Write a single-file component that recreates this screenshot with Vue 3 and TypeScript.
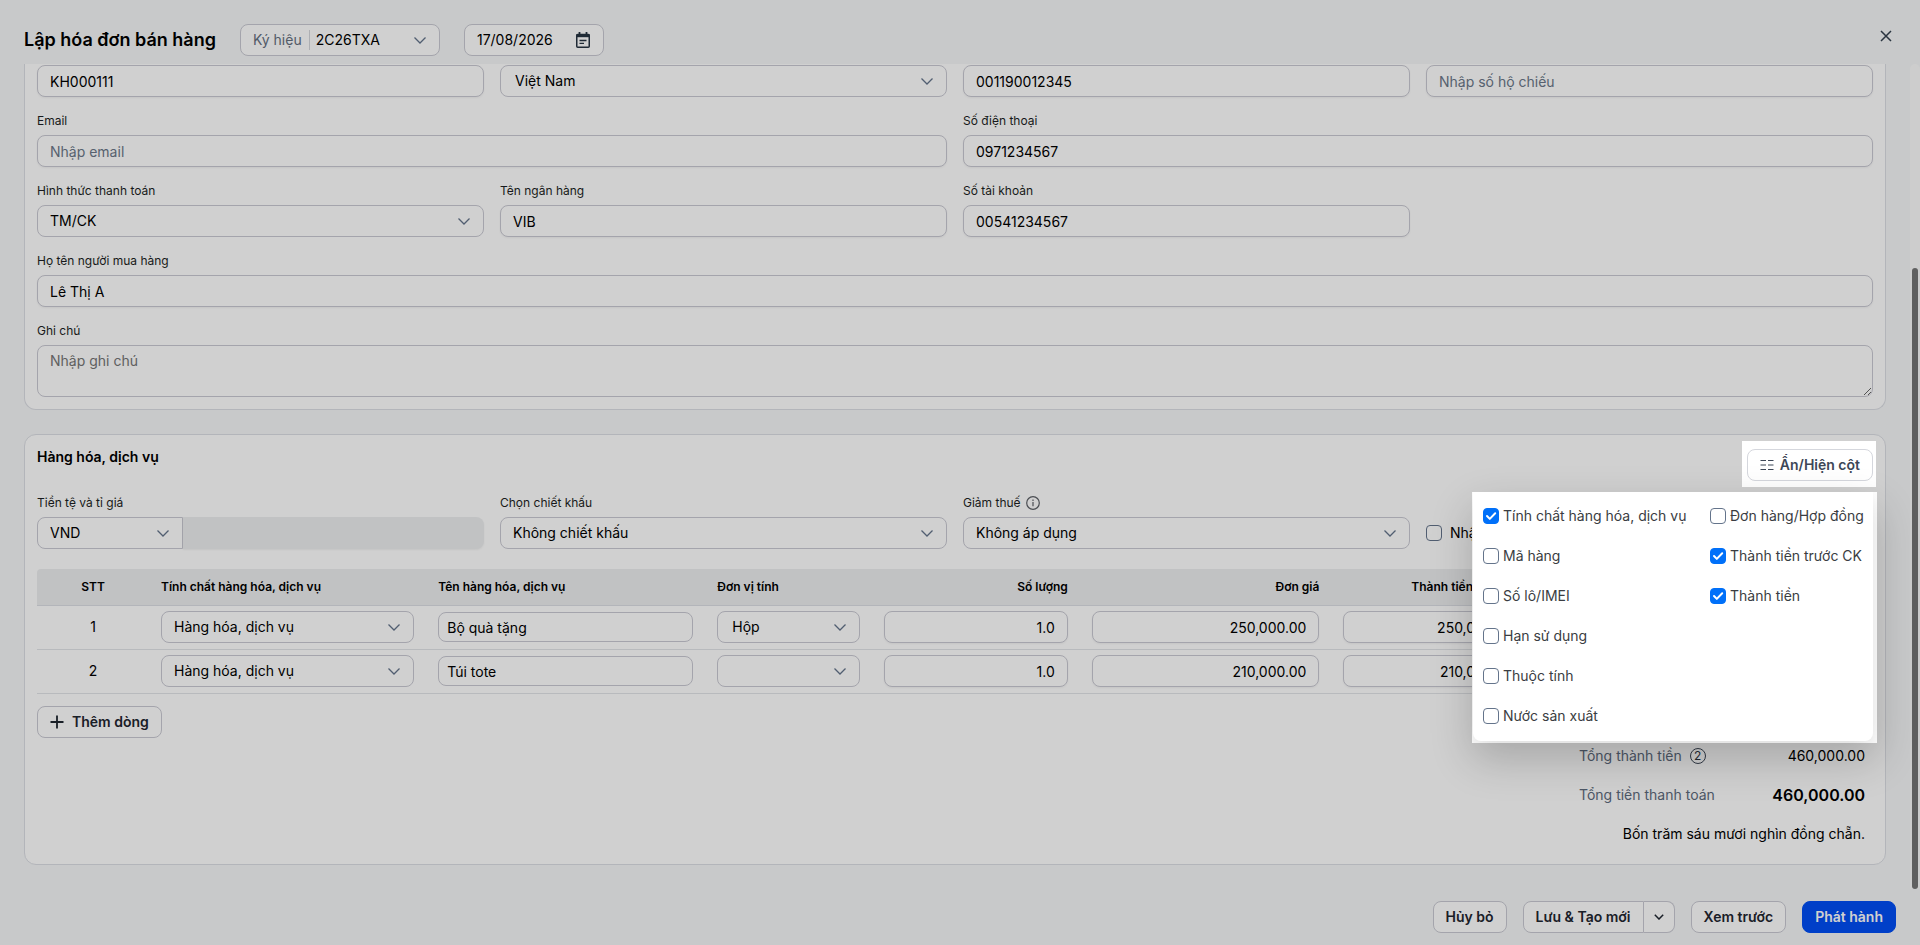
<script setup lang="ts">
import { ref } from 'vue'

interface ColumnOption {
  label: string
  shown: boolean
}

interface InvoiceLine {
  name: string
  unit: string
  quantity: string
  price: string
  amount: string
}

const series = ref('2C26TXA')
const issueDate = ref('17/08/2026')
const customerCode = ref('KH000111')
const country = ref('Việt Nam')
const citizenId = ref('001190012345')
const passport = ref('')
const email = ref('')
const phone = ref('0971234567')
const paymentMethod = ref('TM/CK')
const bankName = ref('VIB')
const bankAccount = ref('00541234567')
const buyerName = ref('Lê Thị A')
const note = ref('')
const currency = ref('VND')
const discount = ref('Không chiết khấu')
const taxReduction = ref('Không áp dụng')
const manualEntry = ref(false)
const pickerOpen = ref(true)

const columnOptions = ref<ColumnOption[]>([
  { label: 'Tính chất hàng hóa, dịch vụ', shown: true },
  { label: 'Mã hàng', shown: false },
  { label: 'Số lô/IMEI', shown: false },
  { label: 'Hạn sử dụng', shown: false },
  { label: 'Thuộc tính', shown: false },
  { label: 'Nước sản xuất', shown: false },
  { label: 'Đơn hàng/Hợp đồng', shown: false },
  { label: 'Thành tiền trước CK', shown: true },
  { label: 'Thành tiền', shown: true },
])

const lines = ref<InvoiceLine[]>([
  { name: 'Bộ quà tặng', unit: 'Hộp', quantity: '1.0', price: '250,000.00', amount: '250,000.00' },
  { name: 'Túi tote', unit: '', quantity: '1.0', price: '210,000.00', amount: '210,000.00' },
])
</script>

<template>
  <div class="page">
    <header class="topbar">
      <h1>Lập hóa đơn bán hàng</h1>
      <div class="series control">
        <label for="series">Ký hiệu</label>
        <span class="select">
          <select id="series" v-model="series"><option>2C26TXA</option></select>
          <svg class="chevron" viewBox="0 0 12 7"><path d="M.5.5 6 6 11.5.5" /></svg>
        </span>
      </div>
      <div class="date control">
        <input v-model="issueDate" type="text" aria-label="Ngày hóa đơn" />
        <svg viewBox="0 0 16 16" width="16" height="16">
          <path d="M1.500 2h13v3.200h-13z" fill="#273442" />
          <path d="M4.500 0v3M11.500 0v3" stroke="#273442" stroke-width="1.800" />
          <rect x="1.750" y="2.500" width="12.500" height="12.700" rx="1" fill="none" stroke="#273442" stroke-width="1.500" />
          <path d="M4.500 8.500h7M4.500 11.300h4.500" stroke="#273442" stroke-width="1.300" />
        </svg>
      </div>
      <button class="close" type="button" aria-label="Đóng">
        <svg viewBox="0 0 12 12" width="12" height="12"><path d="m1 1 10 10M11 1 1 11" stroke="#34404f" stroke-width="1.500" fill="none" /></svg>
      </button>
    </header>

    <div class="body">
      <main>
        <section class="card customer">
          <div class="fields">
            <input v-model="customerCode" class="control" type="text" aria-label="Mã khách hàng" />
            <span class="select roomy">
              <select v-model="country" class="control" aria-label="Quốc gia"><option>Việt Nam</option></select>
              <svg class="chevron" viewBox="0 0 12 7"><path d="M.5.5 6 6 11.5.5" /></svg>
            </span>
            <input v-model="citizenId" class="control" type="text" aria-label="Số căn cước" />
            <input v-model="passport" class="control" type="text" placeholder="Nhập số hộ chiếu" aria-label="Số hộ chiếu" />

            <div class="field half">
              <label for="email">Email</label>
              <input id="email" v-model="email" class="control" type="text" placeholder="Nhập email" />
            </div>
            <div class="field half">
              <label for="phone">Số điện thoại</label>
              <input id="phone" v-model="phone" class="control" type="text" />
            </div>

            <div class="field">
              <label for="payment">Hình thức thanh toán</label>
              <span class="select">
                <select id="payment" v-model="paymentMethod" class="control"><option>TM/CK</option></select>
                <svg class="chevron" viewBox="0 0 12 7"><path d="M.5.5 6 6 11.5.5" /></svg>
              </span>
            </div>
            <div class="field">
              <label for="bank">Tên ngân hàng</label>
              <input id="bank" v-model="bankName" class="control" type="text" />
            </div>
            <div class="field">
              <label for="account">Số tài khoản</label>
              <input id="account" v-model="bankAccount" class="control" type="text" />
            </div>

            <div class="field full">
              <label for="buyer">Họ tên người mua hàng</label>
              <input id="buyer" v-model="buyerName" class="control" type="text" />
            </div>
            <div class="field full">
              <label for="note">Ghi chú</label>
              <textarea id="note" v-model="note" class="control" placeholder="Nhập ghi chú"></textarea>
            </div>
          </div>
        </section>

        <section class="card goods">
          <div class="goods-head">
            <h2>Hàng hóa, dịch vụ</h2>
            <div class="picker">
              <button class="btn toggle" type="button" :aria-expanded="pickerOpen" @click="pickerOpen = !pickerOpen">
                <svg viewBox="0 0 14 12" width="14" height="12">
                  <path d="M.5 1.500h5.500M8 1.500h5.500M.5 6h5.500M8 6h5.500M.5 10.500h5.500M8 10.500h5.500" stroke="#3d4757" stroke-width="1.200" />
                </svg>
                Ẩn/Hiện cột
              </button>
              <div v-if="pickerOpen" class="menu-frame">
                <div class="menu-clip">
                  <div class="menu">
                    <label v-for="option in columnOptions" :key="option.label">
                      <span class="check">
                        <input v-model="option.shown" type="checkbox" />
                        <svg viewBox="0 0 16 16"><path d="m4 8 2.800 2.900L12.200 5.300" /></svg>
                      </span>
                      {{ option.label }}
                    </label>
                  </div>
                </div>
              </div>
            </div>
          </div>

          <div class="fields">
            <div class="field">
              <label for="currency">Tiền tệ và tỉ giá</label>
              <div class="currency">
                <span class="select">
                  <select id="currency" v-model="currency" class="control"><option>VND</option></select>
                  <svg class="chevron" viewBox="0 0 12 7"><path d="M.5.5 6 6 11.5.5" /></svg>
                </span>
                <input type="text" disabled aria-label="Tỉ giá" />
              </div>
            </div>
            <div class="field">
              <label for="discount">Chọn chiết khấu</label>
              <span class="select">
                <select id="discount" v-model="discount" class="control"><option>Không chiết khấu</option></select>
                <svg class="chevron" viewBox="0 0 12 7"><path d="M.5.5 6 6 11.5.5" /></svg>
              </span>
            </div>
            <div class="field">
              <label for="tax">Giảm thuế
                <svg viewBox="0 0 14 14" width="14" height="14">
                  <circle cx="7" cy="7" r="6.300" fill="none" stroke="#5c6066" stroke-width="1.200" />
                  <path d="M7 6v4.200M7 3.600v1.300" stroke="#5c6066" stroke-width="1.200" />
                </svg>
              </label>
              <span class="select">
                <select id="tax" v-model="taxReduction" class="control"><option>Không áp dụng</option></select>
                <svg class="chevron" viewBox="0 0 12 7"><path d="M.5.5 6 6 11.5.5" /></svg>
              </span>
            </div>
            <label class="manual">
              <span class="check">
                <input v-model="manualEntry" type="checkbox" />
                <svg viewBox="0 0 16 16"><path d="m4 8 2.800 2.900L12.200 5.300" /></svg>
              </span>
              Nhập
            </label>
          </div>

          <table>
            <colgroup>
              <col class="c-index" />
              <col class="c-kind" />
              <col class="c-name" />
              <col class="c-unit" />
              <col class="c-money" />
              <col class="c-price" />
              <col class="c-money" />
              <col />
            </colgroup>
            <thead>
              <tr>
                <th class="center">STT</th>
                <th>Tính chất hàng hóa, dịch vụ</th>
                <th>Tên hàng hóa, dịch vụ</th>
                <th>Đơn vị tính</th>
                <th class="right">Số lượng</th>
                <th class="right">Đơn giá</th>
                <th class="right">Thành tiền trước CK</th>
                <th></th>
              </tr>
            </thead>
            <tbody>
              <tr v-for="(line, index) in lines" :key="line.name">
                <td class="center">{{ index + 1 }}</td>
                <td>
                  <span class="select">
                    <select class="control" aria-label="Tính chất"><option>Hàng hóa, dịch vụ</option></select>
                    <svg class="chevron" viewBox="0 0 12 7"><path d="M.5.5 6 6 11.5.5" /></svg>
                  </span>
                </td>
                <td><input v-model="line.name" class="control compact" type="text" aria-label="Tên hàng" /></td>
                <td>
                  <span class="select roomy">
                    <select v-model="line.unit" class="control" aria-label="Đơn vị tính"><option>{{ line.unit }}</option></select>
                    <svg class="chevron" viewBox="0 0 12 7"><path d="M.5.5 6 6 11.5.5" /></svg>
                  </span>
                </td>
                <td><input v-model="line.quantity" class="control right" type="text" aria-label="Số lượng" /></td>
                <td><input v-model="line.price" class="control right" type="text" aria-label="Đơn giá" /></td>
                <td><input v-model="line.amount" class="control right" type="text" aria-label="Thành tiền" /></td>
                <td></td>
              </tr>
            </tbody>
          </table>

          <button class="btn add" type="button">
            <svg viewBox="0 0 14 14" width="14" height="14"><path d="M7 .5v13M.5 7h13" stroke="#1f2630" stroke-width="1.800" /></svg>
            Thêm dòng
          </button>

          <div class="totals">
            <div class="total">
              <span>Tổng thành tiền <i>2</i></span>
              <b class="plain">460,000.00</b>
            </div>
            <div class="total">
              <span>Tổng tiền thanh toán</span>
              <b>460,000.00</b>
            </div>
            <p>Bốn trăm sáu mươi nghìn đồng chẵn.</p>
          </div>
        </section>
      </main>
      <div class="track"><div class="thumb"></div></div>
    </div>

    <footer>
      <button class="btn" type="button">Hủy bỏ</button>
      <div class="split">
        <button class="btn" type="button">Lưu &amp; Tạo mới</button>
        <button class="btn more" type="button" aria-label="Thêm lựa chọn">
          <svg viewBox="0 0 10 6" width="10" height="6"><path d="m.8.8 4.200 4.200L9.200.8" stroke="#1f2630" stroke-width="1.500" fill="none" /></svg>
        </button>
      </div>
      <button class="btn" type="button">Xem trước</button>
      <button class="btn primary" type="button">Phát hành</button>
    </footer>

    <div class="scrim"></div>
  </div>
</template>

<style>
body {
  margin: 0;
  background: #f5f7f8;
}
</style>

<style scoped>
* {
  box-sizing: border-box;
}

.page {
  display: flex;
  flex-direction: column;
  min-height: 100vh;
  background: #f5f7f8;
  color: #000;
  font: 14px/20px Inter, "Liberation Sans", sans-serif;
}

input,
select,
textarea,
button {
  margin: 0;
  color: inherit;
  font: inherit;
}

.topbar {
  display: flex;
  align-items: flex-start;
  gap: 24px;
  padding: 24px 22px 8px 24px;
}

h1 {
  margin: 0;
  font-size: 18px;
  line-height: 32px;
  font-weight: 600;
}

.control {
  width: 100%;
  height: 32px;
  padding: 0 12px;
  border: 1px solid #cacad3;
  border-radius: 8px;
  background: #fff;
  outline: none;
}

input.control {
  box-shadow: 0 1px 2px rgba(0, 0, 0, 0.05);
}

::placeholder {
  color: #6b7788;
  opacity: 1;
}

.series {
  display: flex;
  align-items: center;
  width: 200px;
}

.series label {
  padding-right: 7px;
  border-right: 1px solid #d5d7dc;
  color: #65707f;
}

.series .select {
  flex: 1;
}

.series select {
  padding: 0 6px;
  border: 0;
  background: none;
}

.series .chevron {
  margin-right: 1px;
}

.date {
  display: flex;
  align-items: center;
  justify-content: space-between;
  width: 140px;
}

.date input {
  width: 84px;
  padding: 0;
  border: 0;
  background: none;
}

.close {
  display: grid;
  place-items: center;
  width: 24px;
  height: 24px;
  margin-left: auto;
  padding: 0;
  border: 0;
  background: none;
}

.body {
  flex: 1;
  display: flex;
}

main {
  flex: 1;
  min-width: 0;
  display: flex;
  flex-direction: column;
  gap: 24px;
  padding: 0 24px 24px;
}

.track {
  display: flex;
  align-items: flex-end;
  justify-content: center;
  width: 10px;
  border-radius: 5px 5px 0 0;
  background: #fcfcfc;
}

.thumb {
  width: 6px;
  height: 75.3%;
  border-radius: 3px;
  background: #767676;
}

.card {
  padding: 12px;
  border: 1px solid #dcdee4;
  border-radius: 12px;
  background: #fff;
}

.customer {
  padding-top: 1px;
  border-top: 0;
  border-radius: 0 0 12px 12px;
}

.fields {
  display: grid;
  grid-template-columns: repeat(4, minmax(0, 1fr));
  gap: 15px 16px;
}

.field {
  display: flex;
  flex-direction: column;
  gap: 5px;
}

.half {
  grid-column: span 2;
}

.full {
  grid-column: 1 / -1;
}

.field label {
  display: flex;
  align-items: center;
  gap: 5px;
  color: #1d1f24;
  font-size: 12px;
  line-height: 18px;
}

textarea.control {
  display: block;
  height: 52px;
  padding: 5px 12px;
  resize: vertical;
}

textarea::placeholder {
  color: #757575;
}

.select {
  display: grid;
  align-items: center;
}

.select select,
.select .chevron {
  grid-area: 1 / 1;
}

select {
  appearance: none;
}

.roomy select {
  padding-left: 14px;
}

.chevron {
  justify-self: end;
  width: 12px;
  height: 7px;
  margin-right: 14px;
  fill: none;
  stroke: #64748b;
  stroke-width: 1.3;
  pointer-events: none;
}

.goods-head {
  display: flex;
  justify-content: space-between;
  min-height: 34px;
  margin-bottom: 13px;
}

h2 {
  margin: 0;
  font-size: 14px;
  line-height: 20px;
  font-weight: 600;
}

.btn {
  display: flex;
  align-items: center;
  height: 32px;
  padding: 0 12px;
  border: 1px solid #cacad3;
  border-radius: 8px;
  background: #fff;
  color: #1f2630;
  font-weight: 600;
  white-space: nowrap;
}

.picker {
  position: relative;
  z-index: 20;
  align-self: flex-end;
}

.picker::before {
  content: "";
  position: absolute;
  inset: -8px -3px -6px -5px;
  background: #fff;
}

.toggle {
  position: relative;
  gap: 6px;
  border-color: #d5d7dd;
  color: #3d4757;
}

.menu-frame {
  position: absolute;
  top: calc(100% + 11px);
  right: -4px;
  box-shadow: 0 16px 40px rgba(0, 0, 0, 0.2);
}

.menu-clip {
  padding: 0 4px 2px 1px;
  overflow: hidden;
  background: #fff;
}

.menu {
  display: grid;
  grid-template-rows: repeat(6, 40px);
  grid-template-columns: 227px 163px;
  grid-auto-flow: column;
  padding: 4px 0 5px 10px;
  border-radius: 0 0 8px 8px;
  background: #fff;
  box-shadow: 0 8px 24px rgba(0, 0, 0, 0.14);
}

.menu label {
  display: flex;
  align-items: center;
  gap: 4px;
  color: #3a3d42;
  white-space: nowrap;
}

.check {
  display: grid;
  width: 16px;
  height: 16px;
}

.check input,
.check svg {
  grid-area: 1 / 1;
  width: 16px;
  height: 16px;
}

.check input {
  appearance: none;
  border: 1px solid #64748b;
  border-radius: 4px;
  background: #fff;
}

.check svg {
  visibility: hidden;
  fill: none;
  stroke: #fff;
  stroke-width: 2;
  stroke-linecap: round;
  stroke-linejoin: round;
  pointer-events: none;
}

.check input:checked {
  border-color: #0070f9;
  background: #0070f9;
}

.check input:checked + svg {
  visibility: visible;
}

.currency {
  display: flex;
}

.currency .select {
  width: 146px;
}

.currency select {
  border-radius: 8px 0 0 8px;
}

.currency input {
  flex: 1;
  min-width: 0;
  border: 0;
  border-radius: 0 8px 8px 0;
  background: #edeef0;
  box-shadow: 0 1px 2px rgba(0, 0, 0, 0.06);
}

.manual {
  display: flex;
  align-items: center;
  align-self: end;
  gap: 8px;
  height: 32px;
}

table {
  width: 100%;
  margin: 20px 0 12px;
  border-spacing: 0;
  table-layout: fixed;
}

.c-index {
  width: 6.1%;
}

.c-kind {
  width: 15.1%;
}

.c-name {
  width: 15.2%;
}

.c-unit {
  width: 9.1%;
}

.c-money {
  width: 11.3%;
}

.c-price {
  width: 13.7%;
}

th {
  height: 37px;
  padding: 0 12px;
  border-bottom: 1px solid #dcdee4;
  background: #edeef0;
  font-size: 12px;
  line-height: 16px;
  font-weight: 600;
  text-align: left;
  white-space: nowrap;
}

th:first-child {
  border-top-left-radius: 4px;
}

th:last-child {
  border-top-right-radius: 4px;
}

td {
  height: 44px;
  padding: 5px 12px 6px;
  border-bottom: 1px solid #e2e4e8;
}

td .control {
  display: block;
}

td .compact {
  height: 30px;
  padding: 0 8px;
  box-shadow: none;
}

.center {
  text-align: center;
}

.right {
  text-align: right;
}

.add {
  gap: 8px;
}

.totals {
  display: flex;
  flex-direction: column;
  gap: 19px;
  width: 302px;
  margin-left: auto;
  padding: 8px;
}

.total {
  display: flex;
  justify-content: space-between;
}

.total span {
  display: flex;
  align-items: center;
  gap: 8px;
  color: #5e6b7d;
}

.total i {
  width: 16px;
  height: 16px;
  border: 1px solid #3d4757;
  border-radius: 50%;
  color: #2c3440;
  font-size: 12px;
  line-height: 14px;
  font-style: normal;
  text-align: center;
}

.total b {
  font-size: 16px;
  font-weight: 600;
}

.total .plain {
  font-size: 14px;
  font-weight: 400;
}

.totals p {
  margin: 0;
  text-align: right;
}

footer {
  display: flex;
  justify-content: flex-end;
  gap: 16px;
  padding: 12px 24px;
}

.split {
  display: flex;
}

.split .btn:first-child {
  border-radius: 8px 0 0 8px;
}

.split .more {
  padding: 0 10px;
  border-left: 0;
  border-radius: 0 8px 8px 0;
}

.primary {
  border-color: #004ef5;
  background: #004ef5;
  color: #fff;
}

.scrim {
  position: fixed;
  inset: 0;
  z-index: 10;
  background: rgba(0, 0, 0, 0.184);
  pointer-events: none;
}
</style>
